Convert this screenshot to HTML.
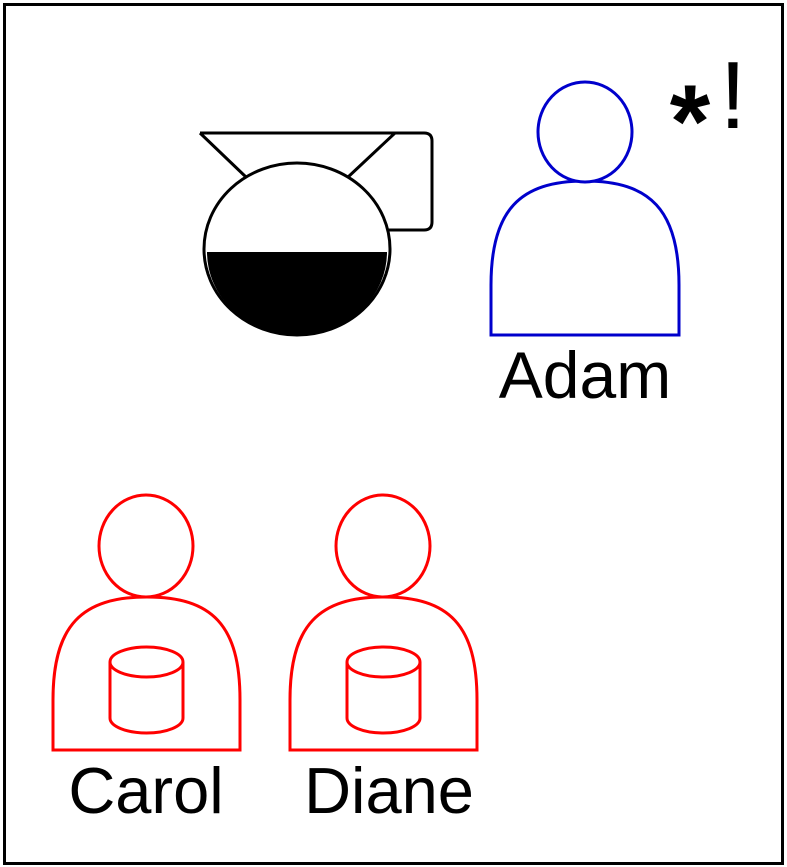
<!DOCTYPE html>
<html><head><style>html,body{margin:0;padding:0;background:#fff}svg{display:block}</style></head><body>
<svg width="787" height="867" viewBox="0 0 787 867" xmlns="http://www.w3.org/2000/svg">
<rect x="4.5" y="4.5" width="778" height="859" fill="#fff" stroke="#000" stroke-width="3"/>
<g fill="none" stroke="#000" stroke-width="3">
<path d="M200 133 L247 178 M395 133 L347 178 M200 133 L424 133 Q432 133 432 141 L432 222 Q432 230 424 230 L388 230"/>
<ellipse cx="297" cy="249" rx="93" ry="86" fill="#fff"/>
</g>
<path d="M207 252 L387 252 A90 83 0 0 1 207 252 Z" fill="#000"/>
<g fill="#fff" stroke="#0000cc" stroke-width="3">
<path d="M491 335 L491 285 C491 210 520 181 585 181 C650 181 679 210 679 285 L679 335 Z"/>
<ellipse cx="585" cy="132" rx="47" ry="50"/>
</g>
<text x="690" y="157" text-anchor="middle" font-family="Liberation Sans, sans-serif" font-size="104" font-weight="bold">*</text>
<text x="733" y="128" text-anchor="middle" font-family="Liberation Sans, sans-serif" font-size="96">!</text>
<text x="585" y="398" text-anchor="middle" font-family="Liberation Sans, sans-serif" font-size="66">Adam</text>
<g id="c" fill="#fff" stroke="#ff0000" stroke-width="3">
<path d="M53 750 L53 700 C53 625 82 597 147 597 C212 597 240 625 240 700 L240 750 Z"/>
<ellipse cx="146" cy="546" rx="47" ry="51"/>
<path d="M110 662 L110 718 A36.5 15 0 0 0 183 718 L183 662"/>
<ellipse cx="146.5" cy="662" rx="36.5" ry="15"/>
</g>
<use href="#c" x="237"/>
<text x="146" y="813" text-anchor="middle" font-family="Liberation Sans, sans-serif" font-size="65">Carol</text>
<text x="389" y="813" text-anchor="middle" font-family="Liberation Sans, sans-serif" font-size="65">Diane</text>
</svg>
</body></html>
